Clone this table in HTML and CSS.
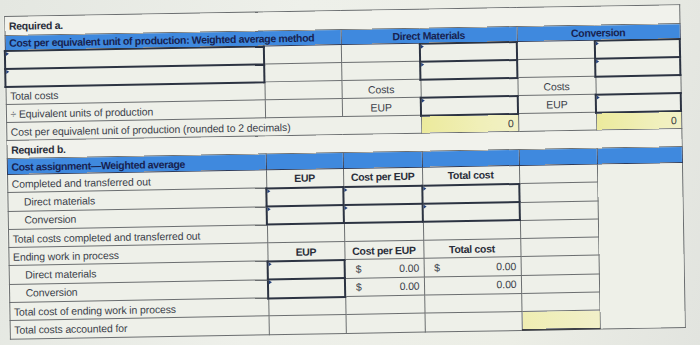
FILE: index.html
```html
<!DOCTYPE html>
<html>
<head>
<meta charset="utf-8">
<link rel="stylesheet" href="styles.css">
</head>
<body>
<div class="sheet">
<table class="grid">
<colgroup><col class="c1"><col class="c2"><col class="c3"><col class="c4"><col class="c5"><col class="c6"></colgroup>
<tr class="r-title"><td colspan="6" class="title">Required a.</td></tr>
<tr class="r-head"><td colspan="2" class="hd">Cost per equivalent unit of production: Weighted average method</td><td colspan="2" class="hd ctr">Direct Materials</td><td colspan="2" class="hd ctr">Conversion</td></tr>
<tr class="r"><td class="inp"></td><td></td><td></td><td class="inp"></td><td></td><td class="inp"></td></tr>
<tr class="r"><td class="inp"></td><td></td><td></td><td class="inp"></td><td></td><td class="inp"></td></tr>
<tr class="r"><td>Total costs</td><td></td><td class="ctr">Costs</td><td></td><td class="ctr">Costs</td><td></td></tr>
<tr class="r"><td>÷ Equivalent units of production</td><td></td><td class="ctr">EUP</td><td class="inp"></td><td class="ctr">EUP</td><td class="inp"></td></tr>
<tr class="r"><td colspan="3">Cost per equivalent unit of production (rounded to 2 decimals)</td><td class="calc">0</td><td></td><td class="calc">0</td></tr>
<tr class="r"><td colspan="6" class="title">Required b.</td></tr>
<tr class="r-head2"><td class="hd">Cost assignment—Weighted average</td><td class="hd"></td><td class="hd"></td><td class="hd"></td><td class="hd"></td><td class="hd"></td></tr>
<tr class="rl"><td>Completed and transferred out</td><td class="ctr b">EUP</td><td class="ctr b">Cost per EUP</td><td class="ctr b">Total cost</td><td></td><td rowspan="9" class="blank"></td></tr>
<tr class="rl"><td class="ind">Direct materials</td><td class="inp"></td><td class="inp"></td><td class="inp"></td><td></td></tr>
<tr class="rl"><td class="ind">Conversion</td><td class="inp"></td><td class="inp"></td><td class="inp"></td><td></td></tr>
<tr class="rl"><td>Total costs completed and transferred out</td><td></td><td></td><td></td><td></td></tr>
<tr class="rl"><td>Ending work in process</td><td class="ctr b">EUP</td><td class="ctr b">Cost per EUP</td><td class="ctr b">Total cost</td><td></td></tr>
<tr class="rl"><td class="ind">Direct materials</td><td class="inp"></td><td class="num"><span class="cur">$</span>0.00</td><td class="num"><span class="cur">$</span>0.00</td><td></td></tr>
<tr class="rl"><td class="ind">Conversion</td><td class="inp"></td><td class="num"><span class="cur">$</span>0.00</td><td class="num">0.00</td><td></td></tr>
<tr class="rl"><td>Total cost of ending work in process</td><td></td><td></td><td></td><td></td></tr>
<tr class="rl"><td>Total costs accounted for</td><td></td><td></td><td></td><td class="tot"></td></tr>
</table>
</div>
</body>
</html>
```

FILE: styles.css
```css
html, body {
  margin: 0;
  padding: 0;
}
body {
  width: 700px;
  height: 345px;
  overflow: hidden;
  background: linear-gradient(100deg, #e4e7e1 0%, #eef0ea 40%, #eceee6 75%, #e2e4df 100%);
  font-family: "Liberation Sans", Arial, sans-serif;
  font-size: 10.5px;
  letter-spacing: -0.12px;
  color: #3b3f4a;
}
.sheet {
  padding: 10px 0 0 6px;
  transform: rotate(-1deg);
  transform-origin: 345px 170px;
}
.grid {
  border-collapse: collapse;
  table-layout: fixed;
  width: 675px;
  background: #eef0e9;
}
.c1 { width: 259px; }
.c2 { width: 77px; }
.c3 { width: 79px; }
.c4 { width: 97px; }
.c5 { width: 78px; }
.c6 { width: 85px; }
.grid td {
  border: 1px solid #6b6e70;
  padding: 0 4px;
  white-space: nowrap;
  overflow: visible;
  position: relative;
  line-height: 12px;
}
.r-title { height: 19px; }
.r-head { height: 15px; }
.r-head2 { height: 16px; }
.r { height: 18px; }
.rl { height: 18.3px; }
.title {
  font-weight: bold;
  color: #2a2e3a;
  background: #f1f2ec;
  letter-spacing: -0.3px;
}
.hd {
  background: #3f89de;
  color: #172250;
  font-weight: bold;
  letter-spacing: -0.35px;
}
.grid td.hd { border-color: #2d3a5a; }
.ctr { text-align: center; }
.b { font-weight: bold; color: #2a2e3a; letter-spacing: -0.3px; }
.grid td.ind { padding-left: 16px; }
.grid td.inp {
  border: 2px solid #2c3342;
}
.grid td.inp::before {
  content: "";
  position: absolute;
  left: 0;
  top: 0;
  border-top: 2px solid transparent;
  border-bottom: 2px solid transparent;
  border-left: 3px solid #23407a;
}
.calc {
  text-align: right;
  background: linear-gradient(90deg, #ecea9c 0%, #f0efb8 60%, #f2f1c6 100%);
  color: #3a3d40;
}
.num { text-align: right; }
.cur { float: left; padding-left: 6px; }
.blank {
  background: #eef0e8;
}
.grid td.tot {
  background: linear-gradient(90deg, #efedb2, #f1f0c9);
  border-bottom: 2px solid #3e4146;
}
```
